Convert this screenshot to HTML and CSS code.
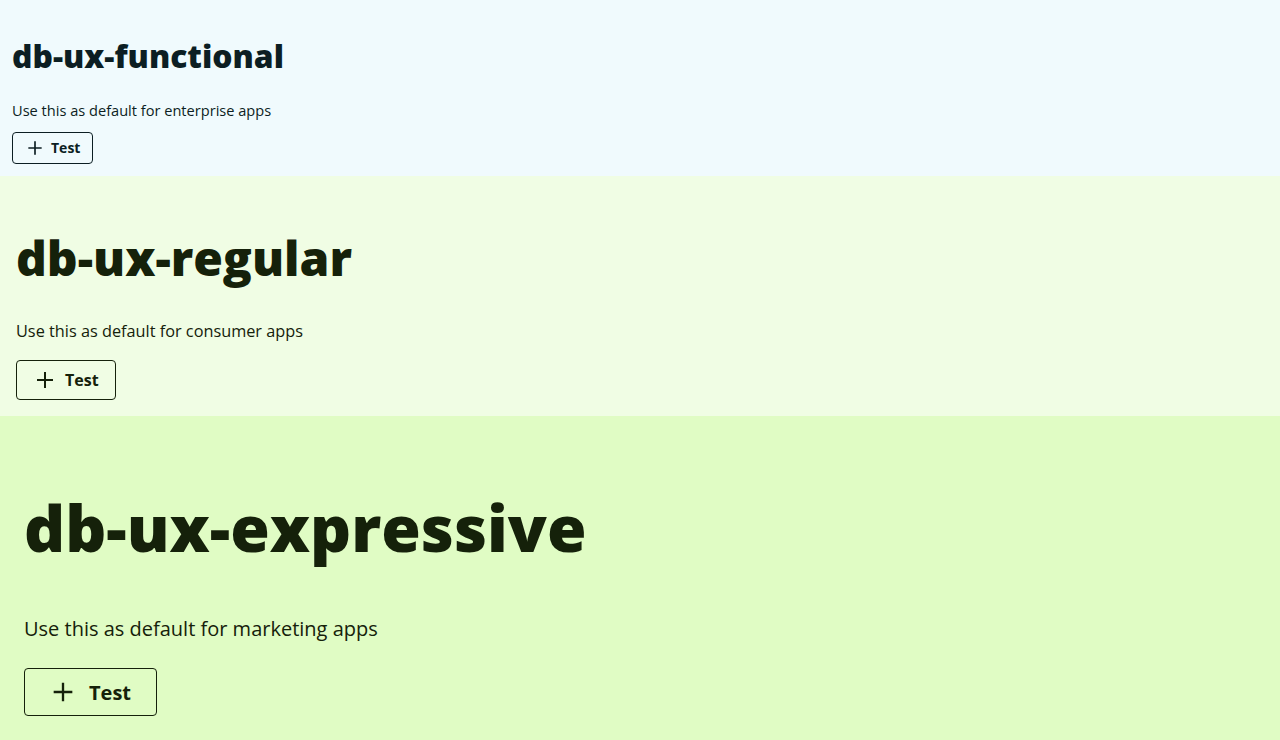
FILE: index.html
```html
<!DOCTYPE html>
<html lang="en">
<head>
<meta charset="utf-8">
<title>DB UX densities</title>
<link rel="stylesheet" href="styles.css">
</head>
<body>
<section class="tone functional">
  <h1 class="title">db-ux-functional</h1>
  <p class="lead">Use this as default for enterprise apps</p>
  <button class="btn" type="button">
    <svg class="icon" viewBox="0 0 24 24" aria-hidden="true"><path d="M12 4v16M4 12h16"/></svg>
    <span>Test</span>
  </button>
</section>
<section class="tone regular">
  <h1 class="title">db-ux-regular</h1>
  <p class="lead">Use this as default for consumer apps</p>
  <button class="btn" type="button">
    <svg class="icon" viewBox="0 0 24 24" aria-hidden="true"><path d="M12 4v16M4 12h16"/></svg>
    <span>Test</span>
  </button>
</section>
<section class="tone expressive">
  <h1 class="title">db-ux-expressive</h1>
  <p class="lead">Use this as default for marketing apps</p>
  <button class="btn" type="button">
    <svg class="icon" viewBox="0 0 24 24" aria-hidden="true"><path d="M12 4v16M4 12h16"/></svg>
    <span>Test</span>
  </button>
</section>
</body>
</html>
```
FILE: styles.css
```css
html, body {
  margin: 0;
  padding: 0;
}
body {
  font-family: "Open Sans", "Liberation Sans", sans-serif;
}
.tone {
  display: flex;
  flex-direction: column;
  align-items: flex-start;
}
.title {
  margin: 0;
  font-weight: 800;
}
.lead {
  margin: 0;
}
.btn {
  display: inline-flex;
  align-items: center;
  flex-shrink: 0;
  box-sizing: border-box;
  font-family: inherit;
  font-weight: 700;
  background: transparent;
  border-style: solid;
  border-width: 1px;
  border-radius: 4px;
  cursor: pointer;
}
.icon {
  flex-shrink: 0;
  fill: none;
  stroke: currentColor;
  stroke-width: 2;
}

/* functional */
.functional {
  background: #f0fafd;
  color: #0c1e23;
  padding: 12px;
}
.functional .title {
  font-size: 31.8px;
  line-height: 40px;
  margin-top: 24px;
}
.functional .lead {
  font-size: 14.6px;
  line-height: 20px;
  margin-top: 24px;
}
.functional .btn {
  height: 32px;
  margin-top: 12px;
  padding: 0 12px;
  gap: 6px;
  font-size: 14px;
  line-height: 18px;
  color: #0c1e23;
  border-color: #0c1e23;
}
.functional .btn span { margin-top: -1px; }
.functional .icon { width: 20px; height: 20px; }

/* regular */
.regular {
  background: #f0fde4;
  color: #15210a;
  padding: 16px;
}
.regular .title {
  font-size: 48px;
  line-height: 64px;
  margin-top: 34px;
}
.regular .lead {
  font-size: 16.3px;
  line-height: 24px;
  margin-top: 29px;
}
.regular .btn {
  height: 40px;
  margin-top: 17px;
  padding: 0 16px;
  gap: 8px;
  font-size: 16px;
  color: #15210a;
  border-color: #15210a;
}
.regular .icon { width: 24px; height: 24px; }

/* expressive */
.expressive {
  background: #e0fcc4;
  color: #15210a;
  padding: 24px;
}
.expressive .title {
  font-size: 64px;
  line-height: 80px;
  margin-top: 48px;
}
.expressive .lead {
  font-size: 20px;
  line-height: 28px;
  margin-top: 47px;
}
.expressive .btn {
  height: 48px;
  margin-top: 25px;
  padding: 0 25px 0 24px;
  gap: 12px;
  font-size: 20px;
  color: #15210a;
  border-color: #15210a;
}
.expressive .icon { width: 28px; height: 28px; }
```
